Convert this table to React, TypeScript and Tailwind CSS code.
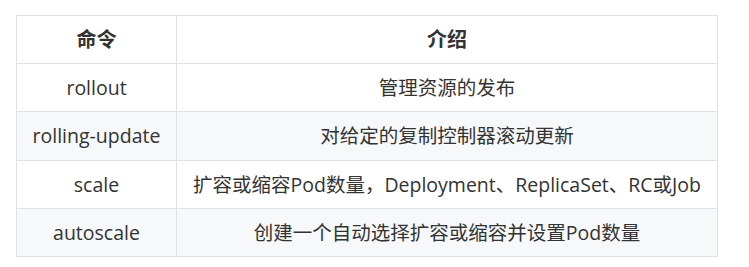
import React from 'react';

const rows = [
    { cmd: 'rollout', desc: '管理资源的发布' },
    { cmd: 'rolling-update', desc: '对给定的复制控制器滚动更新' },
    { cmd: 'scale', desc: '扩容或缩容Pod数量，Deployment、ReplicaSet、RC或Job' },
    { cmd: 'autoscale', desc: '创建一个自动选择扩容或缩容并设置Pod数量' },
];

export default function App() {
    return (
        <div className="w-[749px] h-[267px] bg-white pt-[15px] pl-4 font-['Open_Sans','Noto_Sans_CJK_SC',sans-serif] text-[19.5px] text-[#333]">
            <table className="border-collapse w-[702px] table-fixed">
                <colgroup>
                    <col className="w-[160px]" />
                    <col />
                </colgroup>
                <thead>
                    <tr className="h-[48px] bg-white">
                        <th className="border border-[#dfe2e5] text-center font-bold text-[20px]">命令</th>
                        <th className="border border-[#dfe2e5] text-center font-bold text-[20px]">介绍</th>
                    </tr>
                </thead>
                <tbody>
                    {rows.map((r, i) => (
                        <tr key={r.cmd} className={`${i === 1 ? 'h-[49px]' : 'h-[48px]'} ${i % 2 === 1 ? 'bg-[#f6f8fa]' : 'bg-white'}`}>
                            <td className="border border-[#dfe2e5] text-center">{r.cmd}</td>
                            <td className="border border-[#dfe2e5] text-center">{r.desc}</td>
                        </tr>
                    ))}
                </tbody>
            </table>
        </div>
    );
}
